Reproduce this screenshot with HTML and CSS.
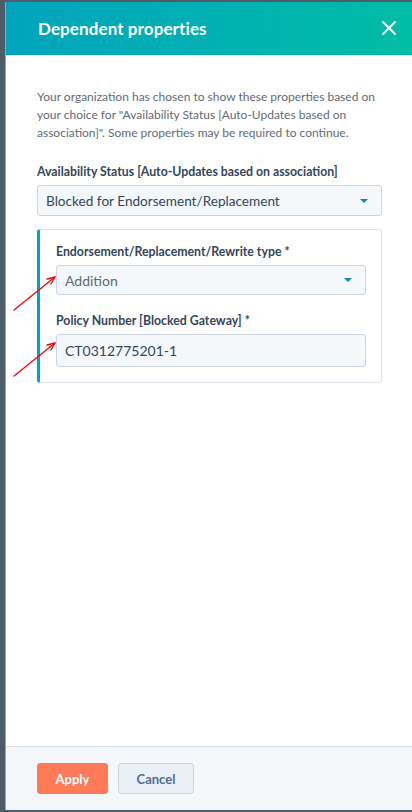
FILE: index.html
```html
<!DOCTYPE html>
<html lang="en">
<head>
<meta charset="utf-8">
<title>Dependent properties</title>
<link rel="stylesheet" href="styles.css">
</head>
<body>
<div class="frame">
  <div class="panel">
    <header class="header">
      <h1 class="title">Dependent properties</h1>
      <button class="close" aria-label="Close">
        <svg width="14" height="14" viewBox="0 0 14 14"><path d="M1 1L13 13M13 1L1 13" stroke="#fff" stroke-width="2" stroke-linecap="round"/></svg>
      </button>
    </header>
    <main class="body">
      <p class="desc">Your organization has chosen to show these properties based on your choice for "Availability Status [Auto-Updates based on association]". Some properties may be required to continue.</p>
      <div class="field">
        <label class="label">Availability Status [Auto-Updates based on association]</label>
        <div class="select"><span>Blocked for Endorsement/Replacement</span><span class="caret"></span></div>
      </div>
      <div class="card">
        <div class="field">
          <label class="label">Endorsement/Replacement/Rewrite type *</label>
          <div class="select"><span class="muted">Addition</span><span class="caret"></span></div>
        </div>
        <div class="field field-gap">
          <label class="label">Policy Number [Blocked Gateway] *</label>
          <div class="input">CT0312775201-1</div>
        </div>
      </div>
      <svg class="arrows" width="60" height="140" viewBox="0 0 60 140">
        <g stroke="#f00" stroke-width="1.3" fill="none" stroke-linecap="round" stroke-linejoin="round">
          <path d="M8 55L49 22"/>
          <path d="M41 24L49 22L45 29"/>
          <path d="M8 121L49 88"/>
          <path d="M41 90L49 88L45 95"/>
        </g>
      </svg>
    </main>
    <footer class="footer">
      <button class="btn btn-apply">Apply</button>
      <button class="btn btn-cancel">Cancel</button>
    </footer>
  </div>
</div>
</body>
</html>
```
FILE: styles.css
```css
* { box-sizing: border-box; }
html, body { margin: 0; padding: 0; }
body {
  width: 412px;
  height: 812px;
  background: #4f5c68;
  font-family: Lato, "Open Sans", sans-serif;
  overflow: hidden;
}
.frame {
  padding: 2px 0 2px 5px;
  height: 812px;
}
.panel {
  position: relative;
  height: 808px;
  background: #fff;
  border-left: 1px solid #9aa5af;
  display: flex;
  flex-direction: column;
}
.header {
  height: 53px;
  flex: none;
  background: linear-gradient(100deg, #00a4bd 0%, #00b3b0 60%, #00bda5 100%);
  display: flex;
  align-items: center;
  justify-content: space-between;
  padding: 0 16px 0 32px;
}
.title {
  margin: 0;
  color: #fff;
  font-size: 17px;
  font-weight: 700;
  letter-spacing: 0.1px;
}
.close {
  border: 0;
  background: transparent;
  padding: 0;
  width: 14px;
  height: 14px;
  display: flex;
  margin-top: -1px;
}
.body {
  flex: 1;
  padding: 33px 30px 0 31px;
  position: relative;
}
.desc {
  margin: 0;
  color: #5f6b77;
  font-size: 12px;
  line-height: 18px;
}
.field { display: flex; flex-direction: column; }
.body > .field { margin-top: 22px; }
.label {
  color: #33475b;
  font-size: 12.3px;
  font-weight: 700;
  line-height: 16px;
  margin-bottom: 5px;
}
.select, .input {
  height: 31px;
  background: #f5f8fa;
  border: 1px solid #cbd6e2;
  border-radius: 3px;
  display: flex;
  align-items: center;
  justify-content: space-between;
  padding: 0 13px 0 8px;
  color: #33475b;
  font-size: 13.6px;
}
.card .select, .card .input { font-size: 14px; }
.muted { color: #5c6b78; }
.caret {
  width: 0; height: 0;
  border-left: 4.5px solid transparent;
  border-right: 4.5px solid transparent;
  border-top: 4.5px solid #0091ae;
}
.card {
  margin-top: 13px;
  border: 1px solid #dfe3eb;
  border-left: 3px solid #00a4bd;
  border-radius: 3px;
  padding: 14px 15px 15px 16px;
}
.card .select { height: 30px; }
.card .input { height: 33px; }
.field-gap { margin-top: 18px; }
.arrows {
  position: absolute;
  left: 0;
  top: 200px;
  overflow: visible;
}
.footer {
  flex: none;
  height: 64px;
  background: #f5f8fa;
  border-top: 1px solid #dfe3eb;
  display: flex;
  gap: 10px;
  padding: 16px 0 0 31px;
}
.btn {
  height: 31px;
  border-radius: 3px;
  font-family: inherit;
  font-size: 13px;
  font-weight: 700;
  padding: 0;
}
.btn-apply {
  width: 71px;
  background: #ff7a59;
  border: 1px solid #ff7a59;
  color: #fff;
}
.btn-cancel {
  width: 76px;
  background: #eaf0f6;
  border: 1px solid #cbd6e2;
  color: #506e91;
}
```
